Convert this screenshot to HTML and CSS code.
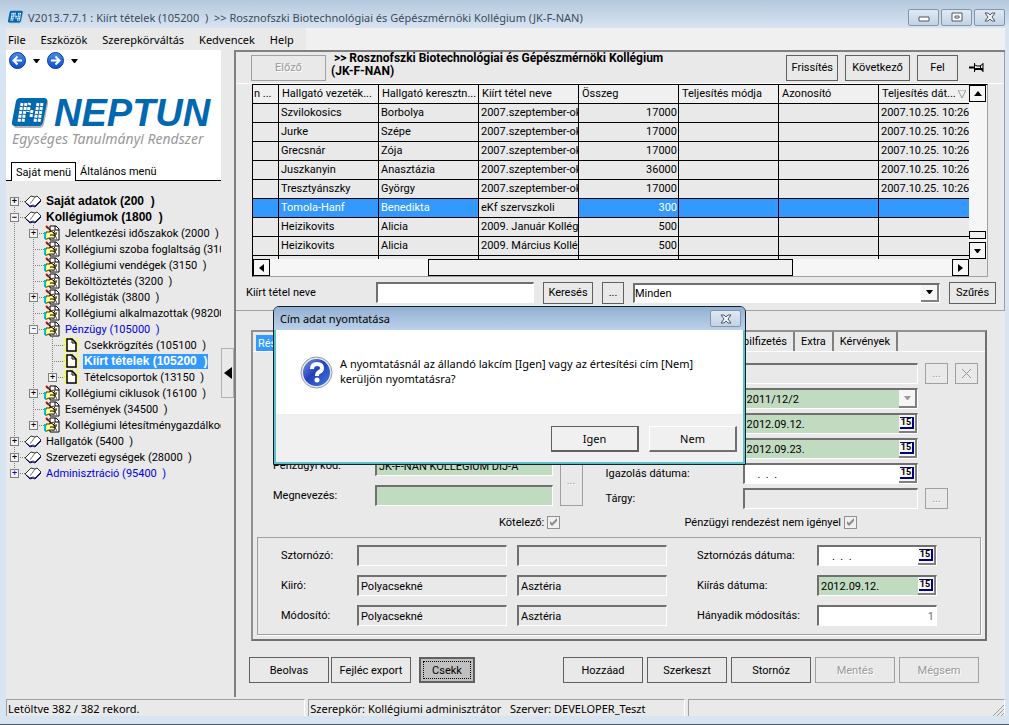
FILE: index.html
```
<!DOCTYPE html>
<html lang="hu">
<head>
    <meta charset="UTF-8">
    <meta name="viewport" content="width=device-width, initial-scale=1.0">
    <title>Kiírt tételek (105200)</title>
    <link rel="stylesheet" href="styles.css">
</head>
<body>
    <!-- shared icons -->
    <svg class="defs" width="0" height="0">
        <symbol id="logo" viewBox="0 0 36 32">
            <path d="M9 3h25q3 0 2 4l-4 20q-1 4-5 4H5q-4 0-3-4L6 6q1-3 3-3z" fill="#b5b5b5"/>
            <path d="M8 1h24q4 0 3 4l-4 20q-1 4-4 4H3q-4 0-3-4L4 4q1-3 4-3z" fill="#0067b1"/>
            <path d="M10 6L7 25M14 6l-3 19M26 6l-3 19M30 6l-3 19M17 10l-1 5M20 13l-1 7M18 6l-1 2" stroke="#fff" stroke-width="3" stroke-dasharray="3 1"/>
        </symbol>
        <symbol id="book" viewBox="0 0 16 14">
            <path d="M0 8L6 2l4 1 2-1 4 4-6 6-2-1-3 1z" fill="#fff" stroke="#000" stroke-width="0.8"/>
            <path d="M10 3L5 10" stroke="#555" stroke-width="0.8"/>
            <path d="M1 9l4 4 3-1 2 1 6-6" fill="none" stroke="#000080"/>
        </symbol>
        <symbol id="hand" viewBox="0 0 16 16">
            <path d="M6 1h6l3 3v11H6z" fill="#fff" stroke="#000"/>
            <path d="M11 1v4h4M12 8h1M11 11h1M8 13h2M12 13h1" fill="none" stroke="#000"/>
            <path d="M2 7h4l3-2 2 1-2 2h3v2h-2v1h1v2H5l-2 1H1z" fill="#ff8" stroke="#000" stroke-width="0.8"/>
            <path d="M1 7v7" stroke="#00c0c0" stroke-width="2"/>
            <path d="M2 1l3 3" stroke="#c00000" stroke-width="2"/>
            <path d="M5 4l6 5M6 10h5" stroke="#000"/>
        </symbol>
        <symbol id="page" viewBox="0 0 16 16">
            <path d="M1 2l3 3M8 0v3M15 2l-2 2M0 8h3M16 8h-3M1 14l3-2M15 15l-2-2" stroke="#ff0" stroke-width="2"/>
            <path d="M4 2h5l4 4v8H4z" fill="#fff" stroke="#000" stroke-width="1.500"/>
            <path d="M9 2v4h4" fill="none" stroke="#000"/>
        </symbol>
        <symbol id="down" viewBox="0 0 7 4"><path d="M0 0h7L4 4H3z" fill="currentColor"/></symbol>
        <symbol id="up" viewBox="0 0 8 5"><path d="M0 5h8L4 0z" fill="currentColor"/></symbol>
        <symbol id="left" viewBox="0 0 5 8"><path d="M5 0v8L0 4z" fill="currentColor"/></symbol>
        <symbol id="right" viewBox="0 0 5 8"><path d="M0 0v8l5-4z" fill="currentColor"/></symbol>
        <symbol id="check" viewBox="0 0 9 9"><path d="M1 3v3l2 2 5-5V0L3 5z" fill="#8c8c8c"/></symbol>
        <symbol id="close" viewBox="0 0 12 10">
            <path d="M1 1h3l2 2 2-2h3L8 5l3 4H8L6 7 4 9H1l3-4z" fill="#f4f4f4" stroke="#4d5663"/>
        </symbol>
        <linearGradient id="ball" x1="0" y1="0" x2="0" y2="1">
            <stop offset="0" stop-color="#4b8be8"/>
            <stop offset="1" stop-color="#0a4fce"/>
        </linearGradient>
        <linearGradient id="quest" x1="0" y1="0" x2="1" y2="1">
            <stop offset="0" stop-color="#7f98e8"/>
            <stop offset="0.45" stop-color="#2440b8"/>
            <stop offset="1" stop-color="#3f7be0"/>
        </linearGradient>
    </svg>

    <header class="title-bar">
        <svg class="title-icon" width="15" height="14"><use href="#logo"/></svg>
        <span class="title">V2013.7.7.1 : Kiírt tételek (105200&nbsp; )&nbsp; &gt;&gt; Rosznofszki Biotechnológiai és Gépészmérnöki Kollégium (JK-F-NAN)</span>
        <button class="win-btn" aria-label="Kis méret"><svg width="12" height="10"><path d="M1 5h10v4H1z" fill="#fff" stroke="#4d5663"/></svg></button>
        <button class="win-btn" aria-label="Teljes méret"><svg width="12" height="10"><path d="M1 1h10v8H1zM4 4h4v2H4z" fill="#fff" stroke="#4d5663"/></svg></button>
        <button class="win-btn" aria-label="Bezárás"><svg width="12" height="10"><use href="#close"/></svg></button>
    </header>

    <nav class="menu">
        <div class="menu-items">
            <button>File</button>
            <button>Eszközök</button>
            <button>Szerepkörváltás</button>
            <button>Kedvencek</button>
            <button>Help</button>
        </div>
    </nav>

    <div class="content">
        <aside class="sidebar">
            <div class="side-top">
                <div class="history">
                    <button aria-label="Vissza"><svg width="17" height="17"><circle cx="8.5" cy="8.5" r="8" fill="url(#ball)" stroke="#0a3a9c"/><path d="M13 8.500H5M8.500 4.500l-4 4 4 4" fill="none" stroke="#fff" stroke-width="2"/></svg></button>
                    <svg width="7" height="4"><use href="#down"/></svg>
                    <button aria-label="Előre"><svg width="17" height="17"><circle cx="8.5" cy="8.5" r="8" fill="url(#ball)" stroke="#0a3a9c"/><path d="M4 8.500h8M8.500 4.500l4 4-4 4" fill="none" stroke="#fff" stroke-width="2"/></svg></button>
                    <svg width="7" height="4"><use href="#down"/></svg>
                </div>
                <div class="brand">
                    <div class="brand-row">
                        <svg width="36" height="32"><use href="#logo"/></svg>
                        <span class="brand-name">NEPTUN</span>
                    </div>
                    <div class="brand-sub">Egységes Tanulmányi Rendszer</div>
                </div>
                <div class="side-tabs">
                    <button class="active">Saját menü</button>
                    <button>Általános menü</button>
                </div>
            </div>
            <ul class="tree">
                <li><div class="row bold"><button class="toggle">+</button><svg><use href="#book"/></svg><span>Saját adatok (200&nbsp; )</span></div></li>
                <li><div class="row bold"><button class="toggle">−</button><svg><use href="#book"/></svg><span>Kollégiumok (1800&nbsp; )</span></div>
                    <ul>
                        <li><div class="row"><button class="toggle">+</button><svg><use href="#hand"/></svg><span>Jelentkezési időszakok (2000&nbsp; )</span></div></li>
                        <li><div class="row"><svg><use href="#hand"/></svg><span>Kollégiumi szoba foglaltság (3100&nbsp; )</span></div></li>
                        <li><div class="row"><svg><use href="#hand"/></svg><span>Kollégiumi vendégek (3150&nbsp; )</span></div></li>
                        <li><div class="row"><svg><use href="#hand"/></svg><span>Beköltöztetés (3200&nbsp; )</span></div></li>
                        <li><div class="row"><button class="toggle">+</button><svg><use href="#hand"/></svg><span>Kollégisták (3800&nbsp; )</span></div></li>
                        <li><div class="row"><svg><use href="#hand"/></svg><span>Kollégiumi alkalmazottak (98200&nbsp; )</span></div></li>
                        <li><div class="row blue"><button class="toggle">−</button><svg><use href="#hand"/></svg><span>Pénzügy (105000&nbsp; )</span></div>
                            <ul>
                                <li><div class="row"><svg><use href="#page"/></svg><span>Csekkrögzítés (105100&nbsp; )</span></div></li>
                                <li><div class="row bold selected"><svg><use href="#page"/></svg><span>Kiírt tételek (105200&nbsp; )</span></div></li>
                                <li><div class="row"><button class="toggle">+</button><svg><use href="#page"/></svg><span>Tételcsoportok (13150&nbsp; )</span></div></li>
                            </ul>
                        </li>
                        <li><div class="row"><button class="toggle">+</button><svg><use href="#hand"/></svg><span>Kollégiumi ciklusok (16100&nbsp; )</span></div></li>
                        <li><div class="row"><svg><use href="#hand"/></svg><span>Események (34500&nbsp; )</span></div></li>
                        <li><div class="row"><button class="toggle">+</button><svg><use href="#hand"/></svg><span>Kollégiumi létesítménygazdálkodás</span></div></li>
                    </ul>
                </li>
                <li><div class="row"><button class="toggle">+</button><svg><use href="#book"/></svg><span>Hallgatók (5400&nbsp; )</span></div></li>
                <li><div class="row"><button class="toggle">+</button><svg><use href="#book"/></svg><span>Szervezeti egységek (28000&nbsp; )</span></div></li>
                <li><div class="row blue"><button class="toggle">+</button><svg><use href="#book"/></svg><span>Adminisztráció (95400&nbsp; )</span></div></li>
            </ul>
        </aside>
        <div class="splitter"><button aria-label="Menü elrejtése"><svg width="8" height="12"><path d="M8 0v12L0 6z"/></svg></button></div>

        <main class="main">
            <section class="top-panel">
                <div class="toolbar">
                    <button class="btn prev" disabled>Előző</button>
                    <h1>&nbsp;&gt;&gt; Rosznofszki Biotechnológiai és Gépészmérnöki Kollégium<br>(JK-F-NAN)</h1>
                    <button class="btn">Frissítés</button>
                    <button class="btn next">Következő</button>
                    <button class="btn up">Fel</button>
                    <svg class="pin" width="15" height="11"><path d="M0 5.500h5" stroke="#000" stroke-width="2"/><path d="M5.500 1v9M6 3l2 1h3l3-2M6 8l2-1h3l3 2M11.500 3v5M14 1v9" fill="none" stroke="#000"/><path d="M6 7h8" stroke="#000" stroke-width="2"/></svg>
                </div>
                <div class="grid-box">
                    <div class="grid-view">
                        <table class="grid">
                            <colgroup><col class="c-first"><col class="c"><col class="c"><col class="c"><col class="c"><col class="c"><col class="c"><col></colgroup>
                            <thead>
                                <tr><th>n ...</th><th>Hallgató vezeték...</th><th>Hallgató keresztn...</th><th>Kiírt tétel neve</th><th>Összeg</th><th>Teljesítés módja</th><th>Azonosító</th><th><span class="sorted">Teljesítés dát...<svg width="8" height="8"><path d="M0 0h8L4 8z" fill="none" stroke="#999"/></svg></span></th></tr>
                            </thead>
                            <tbody>
                                <tr><td></td><td>Szvilokosics</td><td>Borbolya</td><td>2007.szeptember-ok</td><td class="num">17000</td><td></td><td></td><td>2007.10.25. 10:26:</td></tr>
                                <tr><td></td><td>Jurke</td><td>Szépe</td><td>2007.szeptember-ok</td><td class="num">17000</td><td></td><td></td><td>2007.10.25. 10:26:</td></tr>
                                <tr><td></td><td>Grecsnár</td><td>Zója</td><td>2007.szeptember-ok</td><td class="num">17000</td><td></td><td></td><td>2007.10.25. 10:26:</td></tr>
                                <tr><td></td><td>Juszkanyin</td><td>Anasztázia</td><td>2007.szeptember-ok</td><td class="num">36000</td><td></td><td></td><td>2007.10.25. 10:26:</td></tr>
                                <tr><td></td><td>Tresztyánszky</td><td>György</td><td>2007.szeptember-ok</td><td class="num">17000</td><td></td><td></td><td>2007.10.25. 10:26:</td></tr>
                                <tr class="selected"><td></td><td>Tomola-Hanf</td><td>Benedikta</td><td class="focus">eKf szervszkoli</td><td class="num">300</td><td></td><td></td><td></td></tr>
                                <tr><td></td><td>Heizikovits</td><td>Alicia</td><td>2009. Január Kollégium</td><td class="num">500</td><td></td><td></td><td></td></tr>
                                <tr><td></td><td>Heizikovits</td><td>Alicia</td><td>2009. Március Kollégium</td><td class="num">500</td><td></td><td></td><td></td></tr>
                                <tr><td></td><td></td><td></td><td></td><td></td><td></td><td></td><td></td></tr>
                            </tbody>
                        </table>
                    </div>
                    <div class="vscroll">
                        <button class="arrow" aria-label="Fel"><svg width="8" height="5"><use href="#up"/></svg></button>
                        <span class="thumb"></span>
                        <button class="arrow" aria-label="Le"><svg width="7" height="4"><use href="#down"/></svg></button>
                    </div>
                    <div class="hscroll">
                        <button class="arrow" aria-label="Balra"><svg width="5" height="8"><use href="#left"/></svg></button>
                        <span class="thumb"></span>
                        <button class="arrow" aria-label="Jobbra"><svg width="5" height="8"><use href="#right"/></svg></button>
                    </div>
                </div>
                <div class="search">
                    <label for="search-text">Kiírt tétel neve</label>
                    <input id="search-text" class="field white" type="text">
                    <button class="btn find">Keresés</button>
                    <button class="btn dots">...</button>
                    <div class="field white combo">
                        <select aria-label="Szűrő"><option>Minden</option></select>
                        <span class="drop"><svg width="7" height="4"><use href="#down"/></svg></span>
                    </div>
                    <button class="btn filter">Szűrés</button>
                </div>
            </section>

            <section class="details">
                <div class="tabs">
                    <button class="active">Részletek</button>
                    <button class="push">Mobilfizetés</button>
                    <button>Extra</button>
                    <button>Kérvények</button>
                </div>
                <div class="tab-body">
                    <div class="columns">
                        <div class="col-left">
                            <label for="code">Pénzügyi kód:</label>
                            <input id="code" class="field green" type="text" value="JK-F-NAN KOLLÉGIUM DÍJ-A" readonly>
                            <button class="btn" disabled>...</button>
                            <label for="name">Megnevezés:</label>
                            <input id="name" class="field green" type="text" readonly>
                        </div>
                        <div class="col-right">
                            <label for="owner">Szervezet:</label>
                            <input id="owner" class="field" type="text" readonly>
                            <button class="btn" disabled>...</button>
                            <button class="btn" disabled aria-label="Törlés"><svg width="9" height="9"><path d="M0 0l9 9M9 0L0 9" stroke="#999"/></svg></button>
                            <label for="term">Félév:</label>
                            <div class="field green combo">
                                <select id="term" disabled><option>2011/12/2</option></select>
                                <span class="drop off"><svg width="7" height="4"><use href="#down"/></svg></span>
                            </div>
                            <label for="d1">Kiírás dátuma:</label>
                            <div class="field green combo"><input id="d1" type="text" value="2012.09.12." readonly><button class="cal" aria-label="Naptár"><b>15</b></button></div>
                            <label for="d2">Határidő:</label>
                            <div class="field green combo"><input id="d2" type="text" value="2012.09.23." readonly><button class="cal" aria-label="Naptár"><b>15</b></button></div>
                            <label for="d3">Igazolás dátuma:</label>
                            <div class="field white combo"><input id="d3" type="text" value="&nbsp;&nbsp;&nbsp;&nbsp;.&nbsp; .&nbsp; ."><button class="cal" aria-label="Naptár"><b>15</b></button></div>
                            <label for="subject">Tárgy:</label>
                            <input id="subject" class="field" type="text" readonly>
                            <button class="btn" disabled>...</button>
                        </div>
                    </div>
                    <div class="checks">
                        <label>Kötelező: <span class="tick"><input type="checkbox" checked disabled><svg width="9" height="9"><use href="#check"/></svg></span></label>
                        <label>Pénzügyi rendezést nem igényel <span class="tick"><input type="checkbox" checked disabled><svg width="9" height="9"><use href="#check"/></svg></span></label>
                    </div>
                    <div class="log">
                        <label for="s1">Sztornózó:</label>
                        <input id="s1" class="field" type="text" readonly>
                        <input class="field" type="text" aria-label="Sztornózó keresztneve" readonly>
                        <label class="second" for="s2">Sztornózás dátuma:</label>
                        <div class="field white combo"><input id="s2" type="text" value="&nbsp;&nbsp;&nbsp;&nbsp;.&nbsp; .&nbsp; ."><button class="cal" aria-label="Naptár"><b>15</b></button></div>
                        <label for="k1">Kiiró:</label>
                        <input id="k1" class="field" type="text" value="Polyacsekné" readonly>
                        <input class="field" type="text" aria-label="Kiiró keresztneve" value="Asztéria" readonly>
                        <label class="second" for="k2">Kiírás dátuma:</label>
                        <div class="field green combo"><input id="k2" type="text" value="2012.09.12." readonly><button class="cal" aria-label="Naptár"><b>15</b></button></div>
                        <label for="m1">Módosító:</label>
                        <input id="m1" class="field" type="text" value="Polyacsekné" readonly>
                        <input class="field" type="text" aria-label="Módosító keresztneve" value="Asztéria" readonly>
                        <label class="second" for="m2">Hányadik módosítás:</label>
                        <input id="m2" class="field white count" type="text" value="1" readonly>
                    </div>
                </div>
            </section>

            <div class="actions">
                <button class="btn">Beolvas</button>
                <button class="btn">Fejléc export</button>
                <button class="btn pressed">Csekk</button>
                <div class="edit">
                    <button class="btn">Hozzáad</button>
                    <button class="btn">Szerkeszt</button>
                    <button class="btn">Stornóz</button>
                    <button class="btn" disabled>Mentés</button>
                    <button class="btn" disabled>Mégsem</button>
                </div>
            </div>
        </main>
    </div>

    <footer class="status">
        <div>Letöltve 382 / 382 rekord.</div>
        <div class="role">Szerepkör: Kollégiumi adminisztrátor&nbsp;&nbsp; Szerver: DEVELOPER_Teszt</div>
        <div class="last"><svg width="12" height="12"><path d="M1 12L12 1M5 12l7-7M9 12l3-3" stroke="#999"/></svg></div>
    </footer>

    <div class="dialog" role="dialog" aria-labelledby="dialog-title">
        <div class="dialog-title">
            <span id="dialog-title">Cím adat nyomtatása</span>
            <button class="win-btn" aria-label="Bezárás"><svg width="12" height="10"><use href="#close"/></svg></button>
        </div>
        <div class="dialog-body">
            <svg width="33" height="33"><circle cx="16.5" cy="16.5" r="15.5" fill="#e8ebf3" stroke="#8f96a8"/><circle cx="16.5" cy="16.5" r="13.5" fill="url(#quest)"/><path d="M12 13q0-5 5-5t5 4q0 3-3 4-2 1-2 4" fill="none" stroke="#fff" stroke-width="4"/><circle cx="17" cy="24" r="2.500" fill="#fff"/></svg>
            <p>A nyomtatásnál az állandó lakcím [Igen] vagy az értesítési cím [Nem] kerüljön nyomtatásra?</p>
        </div>
        <div class="dialog-buttons">
            <button class="default">Igen</button>
            <button>Nem</button>
        </div>
    </div>
</body>
</html>
```
FILE: styles.css
```
* {
    box-sizing: border-box;
}
body {
    margin: 0;
    min-height: 100vh;
    padding: 0 4px 8px 6px;
    display: flex;
    flex-direction: column;
    position: relative;
    background-color: #d7e4f2;
    border-bottom: 2px solid #4a5560;
    font-family: Roboto, "Liberation Sans", sans-serif;
    font-size: 11px;
    color: #000;
}
button, input, select {
    font: inherit;
    color: inherit;
    margin: 0;
    padding: 0;
    border: none;
    border-radius: 0;
    background: none;
}
input, select {
    outline: none;
    min-width: 0;
}
svg {
    display: block;
    flex: none;
}
.defs {
    position: absolute;
}

/* title bar and menu */
.title-bar {
    display: flex;
    align-items: center;
    gap: 5px;
    height: 28px;
    margin: 0 -4px 0 -6px;
    padding: 6px 4px 0 8px;
    background: linear-gradient(#b4c8dd, #d7e4f2);
    font-family: "Noto Sans", sans-serif;
    font-size: 11px;
    color: #3c4a5a;
}
.title {
    flex: 1;
    white-space: nowrap;
    overflow: hidden;
}
.win-btn {
    display: flex;
    align-items: center;
    justify-content: center;
    width: 31px;
    height: 17px;
    border: 1px solid #8495aa;
    border-radius: 2px;
    background: linear-gradient(#dfe9f4, #c3d3e5);
}
.title-bar .win-btn {
    margin-left: -3px;
}
.menu {
    display: flex;
    height: 22px;
    background-color: #f0f0f0;
}
.menu-items {
    display: flex;
    gap: 15px;
    padding: 0 12px 0 2px;
    background-color: #e9e9e9;
    font-family: "Noto Sans", sans-serif;
    font-size: 11px;
}

/* sidebar */
.content {
    flex: 1;
    display: flex;
    background-color: #e9e9e9;
}
.sidebar {
    width: 215px;
    overflow: hidden;
}
.side-top {
    background-color: #fff;
    padding-top: 2px;
}
.history {
    display: flex;
    align-items: center;
    gap: 7px;
    padding-left: 3px;
}
.brand {
    padding: 27px 0 15px 6px;
}
.brand-row {
    display: flex;
    align-items: center;
    gap: 6px;
    height: 34px;
}
.brand-name {
    font-family: "Liberation Sans", Arial, sans-serif;
    font-size: 38px;
    line-height: 34px;
    font-weight: bold;
    font-style: italic;
    color: #0067b1;
}
.brand-sub {
    font-family: "Noto Sans", sans-serif;
    font-size: 14px;
    font-style: italic;
    line-height: 17px;
    color: #999;
    white-space: nowrap;
}
.side-tabs {
    display: flex;
    height: 19px;
    padding-left: 5px;
    box-shadow: inset 0 -1px #000;
}
.side-tabs button {
    padding: 0 4px;
}
.side-tabs .active {
    border: 1px solid #000;
    border-bottom: none;
    background-color: #fff;
}
.tree, .tree ul {
    list-style: none;
    margin: 0;
    padding: 0;
}
.tree {
    padding: 12px 0 0 4px;
}
.tree ul {
    padding-left: 19px;
}
/* dotted guide lines */
.tree li {
    background: repeating-linear-gradient(#808080 0 1px, transparent 1px 2px) 4px 0 / 1px 100% no-repeat;
}
.tree li:last-child {
    background-size: 1px 8px;
}
.tree > li:first-child {
    background-position: 4px 8px;
}
.row {
    display: flex;
    align-items: center;
    height: 16px;
    padding-left: 15px;
    background: repeating-linear-gradient(90deg, #808080 0 1px, transparent 1px 2px) 4px 8px / 11px 1px no-repeat;
    white-space: nowrap;
}
.row svg {
    width: 16px;
    height: 16px;
    margin-right: 4px;
}
.row span {
    padding: 0 1px;
    line-height: 15px;
}
.toggle {
    flex: none;
    width: 9px;
    height: 9px;
    margin: 0 6px 0 -15px;
    border: 1px solid #808080;
    background-color: #f4f4f4;
    font-size: 9px;
    line-height: 7px;
}
.bold {
    font-family: "Liberation Sans", Arial, sans-serif;
    font-weight: bold;
    font-size: 12px;
}
.blue {
    color: #0000e0;
}
.selected span {
    background-color: #3399ff;
    color: #fff;
}
.splitter {
    width: 13px;
    display: flex;
    align-items: flex-start;
    padding-top: 298px;
}
.splitter button {
    width: 13px;
    height: 50px;
    border: 1px solid #b0b0b0;
    display: flex;
    align-items: center;
    justify-content: center;
}

/* main panel */
.main {
    flex: 1;
    min-width: 0;
    display: flex;
    flex-direction: column;
    border-top: 2px solid #808080;
    border-left: 2px solid #808080;
}
.top-panel {
    border-bottom: 1px solid #a0a0a0;
    border-right: 1px solid #a0a0a0;
}
.toolbar {
    display: flex;
    align-items: center;
    gap: 7px;
    height: 32px;
    padding: 0 20px 0 15px;
    border-bottom: 1px solid #fff;
}
.toolbar h1 {
    flex: 1;
    align-self: flex-start;
    margin: 0 0 0 -2px;
    font-size: 12px;
    line-height: 13px;
    white-space: nowrap;
}
.btn {
    height: 26px;
    padding: 0 4px;
    border: 1px solid #606060;
    display: flex;
    align-items: center;
    justify-content: center;
    white-space: nowrap;
}
.btn:disabled {
    color: #999;
    border-color: #a0a0a0;
    text-shadow: 1px 1px #fff;
}
.toolbar .prev {
    width: 75px;
}
.toolbar .next {
    width: 65px;
}
.toolbar .up {
    width: 41px;
}
.pin {
    margin-left: 4px;
}

/* data grid */
.grid-box {
    display: grid;
    grid-template-columns: 1fr 18px;
    margin: 0 16px;
    border: 1px solid #a0a0a0;
    border-top-color: #000;
    border-left-color: #000;
}
.grid-view {
    height: 174px;
    overflow: hidden;
}
.grid {
    width: 100%;
    table-layout: fixed;
    border-collapse: separate;
    border-spacing: 0;
}
.c-first {
    width: 26px;
}
.c {
    width: 100px;
}
.grid th, .grid td {
    height: 19px;
    padding: 0 2px;
    border-right: 1px solid #000;
    border-bottom: 1px solid #000;
    overflow: hidden;
    white-space: nowrap;
    font-weight: normal;
    text-align: left;
    line-height: 14px;
}
.grid th {
    padding: 0 3px;
    background-color: #f0f0f0;
}
.grid th:first-child {
    padding: 0 1px;
}
.grid th:last-child, .grid td:last-child {
    border-right: none;
}
.grid .num {
    text-align: right;
    padding-right: 1px;
}
.sorted {
    display: flex;
    align-items: center;
    justify-content: space-between;
}
.grid .selected td {
    background-color: #3399ff;
    color: #fff;
}
.grid .selected .focus {
    background-color: #e9e9e9;
    color: #000;
}
.vscroll, .hscroll {
    display: flex;
    background-color: #f6f6f6;
}
.vscroll {
    flex-direction: column;
}
.arrow {
    width: 17px;
    height: 17px;
    border: 1px solid #000;
    background-color: #f6f6f6;
    display: flex;
    align-items: center;
    justify-content: center;
}
.thumb {
    border: 1px solid #000;
    background-color: #f0f0f0;
}
.vscroll .thumb {
    width: 17px;
    height: 8px;
    margin: auto 0 3px;
}
.hscroll .thumb {
    width: 51%;
    margin: 0 auto 0 22%;
}

/* fields */
.field {
    height: 21px;
    padding: 0 2px;
    border: 2px solid;
    border-color: #707070 #fff #fff #707070;
    border-right-width: 1px;
    border-bottom-width: 1px;
}
.white {
    background-color: #fff;
}
.green {
    background-color: #c1dbc1;
}
.combo {
    display: flex;
    padding-right: 0;
}
.combo input, .combo select {
    flex: 1;
    width: 0;
    appearance: none;
    opacity: 1;
}
.drop, .cal {
    width: 18px;
    display: flex;
    align-items: center;
    justify-content: center;
    background-color: #f6f6f6;
    border-right: 2px solid #808080;
    border-bottom: 2px solid #808080;
}
.drop.off {
    color: #999;
}
.cal b {
    padding: 0 1px;
    border: solid #000080;
    border-width: 1px 2px 2px 0;
    font-size: 9px;
    line-height: 9px;
}
.search {
    display: flex;
    align-items: center;
    gap: 9px;
    height: 33px;
    padding: 0 8px 2px 10px;
}
.search label {
    width: 121px;
}
.search .btn {
    height: 22px;
}
.search .dots {
    width: 22px;
}
.search .find {
    width: 50px;
}
.search .filter {
    width: 47px;
}
#search-text {
    width: 158px;
}
.search .combo {
    flex: 1;
    height: 20px;
    padding-left: 0;
}

/* detail tabs */
.details {
    margin: 19px 18px 0 15px;
    border: 2px solid #909090;
    border-right: 2px solid #707070;
    border-bottom: 2px solid #707070;
}
.tabs {
    display: flex;
    height: 20px;
    padding-right: 87px;
    border-bottom: 1px solid #fff;
}
.tabs button {
    padding: 0 6px;
    border-right: 2px solid #808080;
}
.tabs .active {
    margin: 3px 0 0 3px;
    padding: 0 2px;
    border: none;
    background-color: #3399ff;
    color: #fff;
}
.tabs .push {
    margin-left: auto;
}
.tab-body {
    padding: 11px 4px 4px;
}
.columns {
    display: flex;
    gap: 23px;
    padding: 0 3px 0 16px;
}
.col-left, .col-right {
    display: grid;
    align-items: center;
    column-gap: 7px;
}
.col-left {
    flex: 310;
    grid-template-columns: 95px 1fr 23px;
    grid-auto-rows: 21px;
    row-gap: 9px;
    align-content: end;
    padding-bottom: 3px;
}
.col-left .btn {
    grid-row: span 2;
    height: 51px;
}
.col-right {
    flex: 373;
    grid-template-columns: 130px 1fr 23px 23px;
    row-gap: 4px;
}
.col-right label {
    grid-column: 1;
}
.col-right .btn {
    height: 21px;
}
.checks {
    display: flex;
    justify-content: space-between;
    padding: 7px 124px 0 242px;
}
.checks label {
    display: flex;
    align-items: center;
    gap: 3px;
}
.tick {
    display: grid;
    place-items: center;
}
.tick > * {
    grid-area: 1 / 1;
}
.tick input {
    appearance: none;
    width: 13px;
    height: 13px;
    border: 1px solid #909090;
    background-color: #f0f0f0;
}
.log {
    display: grid;
    grid-template-columns: 66px 1fr 1fr 130px 120px;
    align-items: center;
    gap: 9px 10px;
    margin-top: 8px;
    padding: 7px 43px 8px 23px;
    border: 1px solid #a0a0a0;
    box-shadow: 1px 1px #fff;
}
.log .second {
    padding-left: 20px;
}
.count {
    text-align: right;
    color: #707070;
}

/* bottom buttons and status */
.actions {
    display: flex;
    gap: 2px;
    padding: 16px 26px 14px 13px;
}
.actions .btn {
    min-width: 80px;
}
.actions .pressed {
    min-width: 56px;
    margin-left: 6px;
    border: 2px solid #606060;
    background-color: #c0c0c0;
    outline: 1px dotted #000;
    outline-offset: -5px;
}
.edit {
    display: flex;
    gap: 4px;
    margin-left: auto;
}
.status {
    display: flex;
    gap: 3px;
    height: 19px;
    padding-top: 2px;
    background-color: #e9e9e9;
    font-family: "Noto Sans", sans-serif;
    font-size: 11px;
    line-height: 17px;
}
.status div {
    flex: 299;
    padding-left: 1px;
    border: 1px solid #a0a0a0;
    border-right-color: #fff;
    border-bottom: none;
    white-space: nowrap;
}
.status .role {
    flex: 377;
}
.status .last {
    flex: 317;
    display: flex;
    justify-content: flex-end;
    align-items: flex-end;
}

/* message box over the form */
.dialog {
    position: absolute;
    left: 273px;
    top: 306px;
    width: 473px;
    border: 1px solid #10202c;
    border-radius: 6px 6px 0 0;
    box-shadow: inset 0 0 0 2px #5bc0c8;
    background-color: #f0f0f0;
    overflow: hidden;
    padding-bottom: 2px;
    font-family: "Noto Sans", sans-serif;
    font-size: 11px;
}
.dialog-title {
    display: flex;
    align-items: center;
    justify-content: space-between;
    height: 23px;
    padding: 0 4px 0 6px;
    background: linear-gradient(#93b0d2, #bcd1e9);
}
.dialog-body {
    display: flex;
    gap: 7px;
    height: 84px;
    margin: 0 2px;
    padding: 26px 24px;
    background-color: #fff;
}
.dialog-body p {
    margin: 0;
    line-height: 15px;
}
.dialog-buttons {
    display: flex;
    justify-content: flex-end;
    gap: 10px;
    padding: 12px 8px 10px;
}
.dialog-buttons button {
    width: 88px;
    height: 26px;
    border: 1px solid;
    border-color: #fff #707070 #707070 #fff;
    border-right-width: 2px;
    border-bottom-width: 2px;
}
.dialog-buttons .default {
    border-color: #606060;
}
```
